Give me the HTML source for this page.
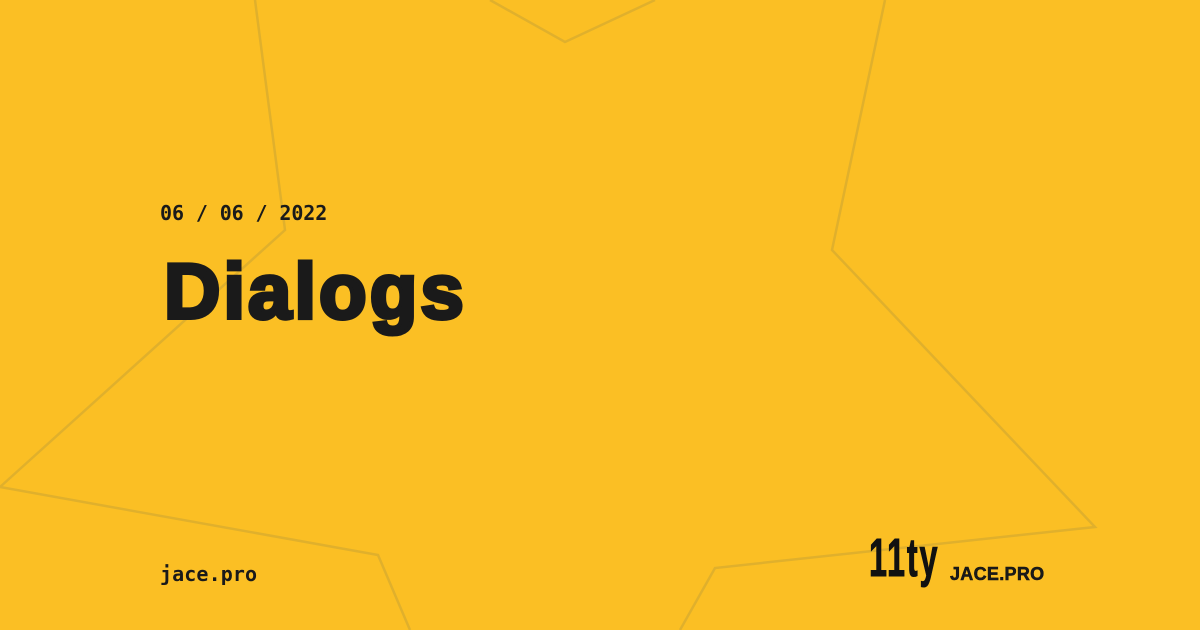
<!DOCTYPE html>
<html><head><style>
html,body{margin:0;padding:0}
body{width:1200px;height:630px;background:#fbbf24;position:relative;overflow:hidden;font-family:"Liberation Sans",sans-serif;color:#1a1a1a}
svg{position:absolute;left:0;top:0}
.date{position:absolute;left:160px;top:201px;font:bold 20px/24px "DejaVu Sans Mono",monospace;letter-spacing:-0.1px}
h1{position:absolute;left:164px;top:241px;margin:0;font:bold 78px/100px "Liberation Sans",sans-serif;-webkit-text-stroke:4px #1a1a1a;letter-spacing:3px}
.site{position:absolute;left:160px;top:562px;font:bold 20px/24px "DejaVu Sans Mono",monospace;letter-spacing:0.1px}
.ty{position:absolute;left:869px;top:528px;font:bold 54px/60px "Liberation Sans",sans-serif;transform:scaleX(0.6);transform-origin:left;letter-spacing:3px;-webkit-text-stroke:1px #111;color:#111}
.jp{position:absolute;left:950px;top:564px;font:bold 18px/20px "Liberation Sans",sans-serif;-webkit-text-stroke:0.5px #111;letter-spacing:0.3px}
</style></head><body>
<svg width="1200" height="630"><g fill="none" stroke="#e0b02c" stroke-width="2.5">
<polyline points="255,0 285,230 0,487 378,555 410,630"/>
<polyline points="490,0 565,42 655,0"/>
<polyline points="885,0 832,250 1095,527 715,568 680,630"/>
</g></svg>
<div class="date">06 / 06 / 2022</div>
<h1>Dialogs</h1>
<div class="site">jace.pro</div>
<div class="ty">11ty</div>
<div class="jp">JACE.PRO</div>
</body></html>
